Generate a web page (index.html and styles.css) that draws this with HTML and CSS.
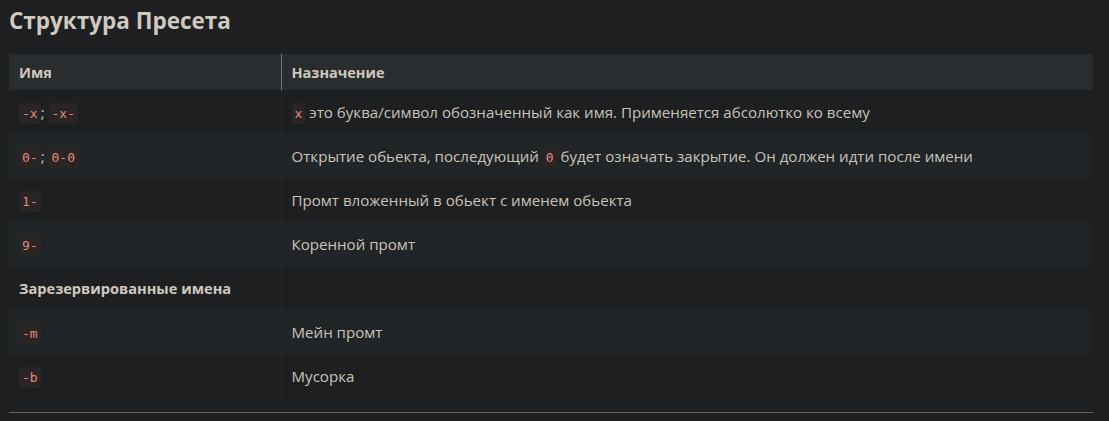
FILE: index.html
```html
<!DOCTYPE html>
<html lang="ru">
<head>
<meta charset="utf-8">
<link rel="stylesheet" href="styles.css">
</head>
<body>
<div class="page">
  <h2 class="title">Структура Пресета</h2>
  <table class="tbl">
    <thead>
      <tr><th class="c1">Имя</th><th class="c2">Назначение</th></tr>
    </thead>
    <tbody>
      <tr><td><code>-x</code>; <code>-x-</code></td><td><code>x</code> это буква/символ обозначенный как имя. Применяется абсолютко ко всему</td></tr>
      <tr><td><code>0-</code>; <code>0-0</code></td><td>Открытие обьекта, последующий <code>0</code> будет означать закрытие. Он должен идти после имени</td></tr>
      <tr><td><code>1-</code></td><td>Промт вложенный в обьект с именем обьекта</td></tr>
      <tr><td><code>9-</code></td><td>Коренной промт</td></tr>
      <tr><td><strong>Зарезервированные имена</strong></td><td></td></tr>
      <tr><td><code>-m</code></td><td>Мейн промт</td></tr>
      <tr><td><code>-b</code></td><td>Мусорка</td></tr>
    </tbody>
  </table>
  <hr class="rule">
</div>
</body>
</html>
```

FILE: styles.css
```css
html, body {
  margin: 0;
  padding: 0;
  background: #1e1f21;
}
.page {
  padding: 0 16px 0 9px;
  font-family: "Open Sans", "Noto Sans", sans-serif;
  font-size: 15.1px;
  color: #c9c3ba;
}
.title {
  margin: 0;
  padding-top: 5px;
  height: 49px;
  font-size: 22.5px;
  font-weight: 700;
  line-height: 32px;
  color: #cfc9bf;
}
.tbl {
  width: 100%;
  border-collapse: collapse;
  border-spacing: 0;
}
.tbl th {
  background: #2a2d30;
  height: 36px;
  padding: 0 10px;
  text-align: left;
  font-weight: 700;
  font-size: 14.5px;
  color: #cfc9bf;
  box-sizing: border-box;
}
.tbl th.c1 { width: 272px; }
.tbl th.c2 { border-left: 1px solid #77787a; }
.tbl td {
  height: 44px;
  padding: 0 10px;
  box-sizing: border-box;
  vertical-align: middle;
}
.tbl td + td { border-left: 1px solid #26292b; }
.tbl tbody tr:nth-child(even) { background: #222527; }
.tbl strong { font-weight: 700; font-size: 14.6px; color: #cfc9bf; }
code {
  font-family: "DejaVu Sans Mono", "Liberation Mono", monospace;
  font-size: 13px;
  background: #2a2525;
  color: #e38b7c;
  padding: 3px 3px;
  border-radius: 2px;
}
.rule {
  margin: 14px 0 0;
  border: 0;
  height: 1px;
  background: #6e6157;
}
```
